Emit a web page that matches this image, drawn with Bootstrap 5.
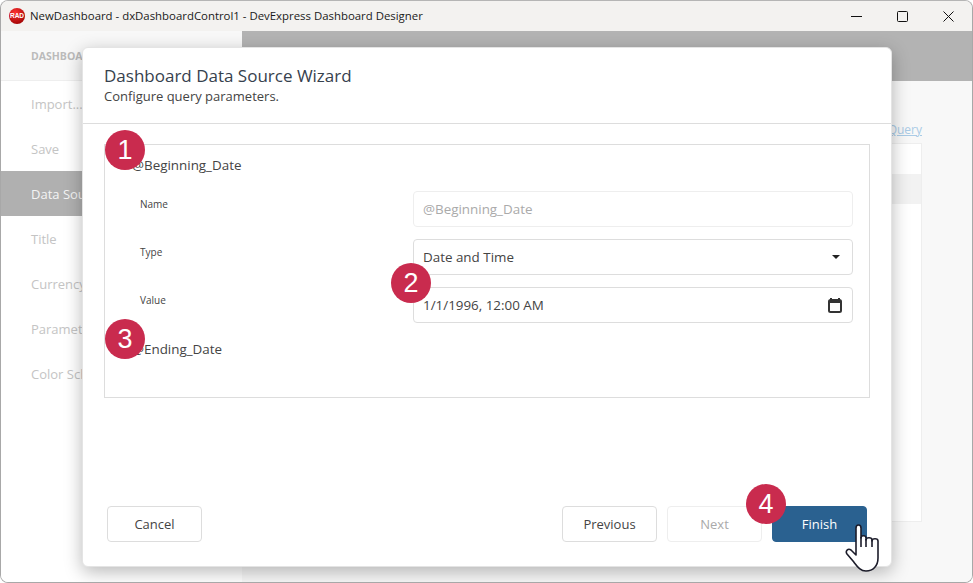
<!DOCTYPE html>
<html lang="en">
<head>
    <meta charset="UTF-8">
    <title>NewDashboard - dxDashboardControl1 - DevExpress Dashboard Designer</title>
    <link href="https://cdn.jsdelivr.net/npm/bootstrap@5.3.0/dist/css/bootstrap.min.css" rel="stylesheet">
    <style>
        html, body { height: 100%; margin: 0; background: #fff; }
        body { font-family: "Open Sans", "Liberation Sans", sans-serif; font-size: 13px; color: #333; overflow: hidden; }
        .app-window { position: relative; height: 583px; border: 1px solid #a8a8a8; border-top-color: #b5b5b5; border-radius: 8px; overflow: hidden; background: #f8f8f8; }
        .title-bar { height: 30px; background: #f3f2f0; font-size: 11.4px; color: #1a1a1a; padding-left: 8px; }
        .title-text { margin-left: 1px; }
        .win-btn { width: 46px; height: 30px; }
        .win-btns { margin-right: 1px; }
        .app-body { height: 552px; }
        .side-pane { width: 241px; background: #fff; flex: none; }
        .side-head { height: 50px; background: #f8f8f8; border-bottom: 1px solid #eee; padding: 3px 0 0 30px; font-size: 10.5px; font-weight: 700; color: #bbb; }
        .side-item { height: 45px; padding: 2px 0 0 30px; font-size: 13px; color: #c4c4c4; }
        .side-item.is-on { background: #b0b0b0; color: #f4f4f4; }
        .main-head { height: 50px; background: #b3b3b3; }
        .main-pane { background: #f8f8f8; }
        .query-link { color: #a9cbe6; font-size: 12px; text-decoration: underline; margin: 42px 50px 0 0; line-height: 14px; text-align: right; }
        .side-list { width: 300px; height: 379px; margin: 6px 50px 0 auto; background: #fff; border: 1px solid #eee; }
        .side-list div { height: 30px; margin-top: 30px; background: #f2f2f2; }
        .wizard { position: absolute; left: 81px; top: 46px; width: 810px; height: 520px; background: #fff; border: 1px solid #e4e4e4; border-radius: 6px; box-shadow: 0 5px 18px rgba(0,0,0,.28); }
        .wizard-head { height: 76px; border-bottom: 1px solid #ddd; padding: 17px 21px 0; }
        .wizard-title { font-size: 17px; line-height: 21px; color: #36414d; margin: 0 0 1px; font-weight: 400; }
        .wizard-sub { font-size: 13px; line-height: 18px; color: #444; }
        .param-box { height: 254px; margin: 20px 21px 0 21px; border: 1px solid #ddd; padding: 10px 16px 0 27px; }
        .param-name { font-size: 13.4px; line-height: 20px; color: #444; }
        .param-row { height: 36px; margin-bottom: 12px; }
        .param-label { width: 281px; padding-left: 8px; font-size: 10px; line-height: 14px; padding-top: 6px; color: #444; flex: none; }
        .param-field { flex: 1; height: 36px; border: 1px solid #ddd; border-radius: 4px; padding: 0 9px; font-size: 13.4px; color: #444; }
        .param-field.is-off { color: #aaa; border-color: #eee; }
        .caret-down { width: 0; height: 0; border-left: 4px solid transparent; border-right: 4px solid transparent; border-top: 4px solid #222; margin-right: 3px; }
        .cal-icon { margin-right: 1px; }
        .wizard-foot { position: absolute; left: 24px; right: 24px; top: 458px; }
        .wiz-btn { width: 95px; height: 36px; border: 1px solid #ddd; border-radius: 4px; background: #fff; color: #444; font-size: 13px; padding: 1px 0 0; margin-left: 10px; }
        .wiz-btn.first-btn { margin-left: 0; margin-right: auto; }
        .wiz-btn.is-off { color: #aaa; border-color: #eee; }
        .wiz-btn.is-main { background: #2a6190; border-color: #2a6190; color: #fff; }
        .step-dot { position: absolute; width: 40px; height: 40px; border-radius: 50%; background: #c92b4e; color: #fff; font-family: "Liberation Sans", sans-serif; font-size: 27px; line-height: 40px; text-align: center; }
        .dot-one { left: 104px; top: 129px; }
        .dot-two { left: 390px; top: 262px; }
        .dot-three { left: 104px; top: 318px; }
        .dot-four { left: 745px; top: 483px; }
        .hand-cursor { position: absolute; left: 844px; top: 521px; }
    </style>
</head>
<body>
    <div class="app-window">
        <div class="title-bar d-flex align-items-center">
            <svg width="16" height="16" viewBox="0 0 16 16" class="me-1 flex-shrink-0">
                <defs><radialGradient id="ball" cx=".4" cy=".3" r=".8"><stop offset="0" stop-color="#f33"/><stop offset="1" stop-color="#900"/></radialGradient></defs>
                <circle cx="8" cy="8" r="8" fill="url(#ball)"/>
                <text x="8" y="10" text-anchor="middle" font-size="6.5" font-weight="700" font-family="Liberation Sans" fill="#fff">RAD</text>
            </svg>
            <span class="title-text">NewDashboard - dxDashboardControl1 - DevExpress Dashboard Designer</span>
            <div class="ms-auto d-flex win-btns">
                <div class="win-btn d-flex align-items-center justify-content-center"><svg width="11" height="11"><path d="M0 5.5H11" stroke="#111"/></svg></div>
                <div class="win-btn d-flex align-items-center justify-content-center"><svg width="11" height="11"><rect x=".5" y=".5" width="10" height="10" rx="1" fill="none" stroke="#111"/></svg></div>
                <div class="win-btn d-flex align-items-center justify-content-center"><svg width="11" height="11"><path d="M.5 .5L10.5 10.5M10.5 .5L.5 10.5" stroke="#111"/></svg></div>
            </div>
        </div>
        <div class="app-body d-flex">
            <div class="side-pane">
                <div class="side-head d-flex align-items-center">DASHBOARD</div>
                <div class="side-item d-flex align-items-center">Import...</div>
                <div class="side-item d-flex align-items-center">Save</div>
                <div class="side-item is-on d-flex align-items-center">Data Source</div>
                <div class="side-item d-flex align-items-center">Title</div>
                <div class="side-item d-flex align-items-center">Currency</div>
                <div class="side-item d-flex align-items-center">Parameters</div>
                <div class="side-item d-flex align-items-center">Color Scheme</div>
            </div>
            <div class="main-pane flex-grow-1 d-flex flex-column">
                <div class="main-head"></div>
                <div class="query-link">Query</div>
                <div class="side-list"><div></div></div>
            </div>
        </div>

        <div class="wizard">
            <div class="wizard-head">
                <h5 class="wizard-title">Dashboard Data Source Wizard</h5>
                <div class="wizard-sub">Configure query parameters.</div>
            </div>
            <div class="param-box">
                <div class="param-name mb-3">@Beginning_Date</div>
                <div class="param-row d-flex">
                    <div class="param-label">Name</div>
                    <div class="param-field is-off d-flex align-items-center">@Beginning_Date</div>
                </div>
                <div class="param-row d-flex">
                    <div class="param-label">Type</div>
                    <div class="param-field d-flex align-items-center justify-content-between">Date and Time<span class="caret-down"></span></div>
                </div>
                <div class="param-row d-flex">
                    <div class="param-label">Value</div>
                    <div class="param-field d-flex align-items-center justify-content-between">1/1/1996, 12:00 AM
                        <svg class="cal-icon" width="14" height="15" viewBox="0 0 14 15"><path d="M3 0V2M11 0V2" stroke="#333" stroke-width="2"/><rect x="1" y="2" width="12" height="12" rx="1.5" fill="none" stroke="#333" stroke-width="2"/><path d="M1 4H13" stroke="#333" stroke-width="2"/></svg>
                    </div>
                </div>
                <div class="param-name mt-3">@Ending_Date</div>
            </div>
            <div class="wizard-foot d-flex">
                <button class="wiz-btn first-btn" type="button">Cancel</button>
                <button class="wiz-btn" type="button">Previous</button>
                <button class="wiz-btn is-off" type="button">Next</button>
                <button class="wiz-btn is-main" type="button">Finish</button>
            </div>
        </div>

        <div class="step-dot dot-one">1</div>
        <div class="step-dot dot-two">2</div>
        <div class="step-dot dot-three">3</div>
        <div class="step-dot dot-four">4</div>
        <svg class="hand-cursor" width="36" height="52" viewBox="0 0 36 52">
            <path d="M11 6 C11 2 16 2 16 6 V16 C16 13 21 13 21 16 V18 C21 15 27 15 27 18 V19 C27 16 33 16 33 19 V36 C33 44 28 49 21 49 C15 49 12 44 8 39 L2 32 C0 29 3 26 6 28 L11 33 Z" fill="#fff" stroke="#1c1c2a" stroke-width="1.6" stroke-linejoin="round"/>
            <path d="M16 15V25M21 17V25M27 18V25" stroke="#1c1c2a" stroke-width="1.6" fill="none"/>
        </svg>
    </div>
    <script src="https://cdn.jsdelivr.net/npm/bootstrap@5.3.0/dist/js/bootstrap.bundle.min.js"></script>
</body>
</html>
